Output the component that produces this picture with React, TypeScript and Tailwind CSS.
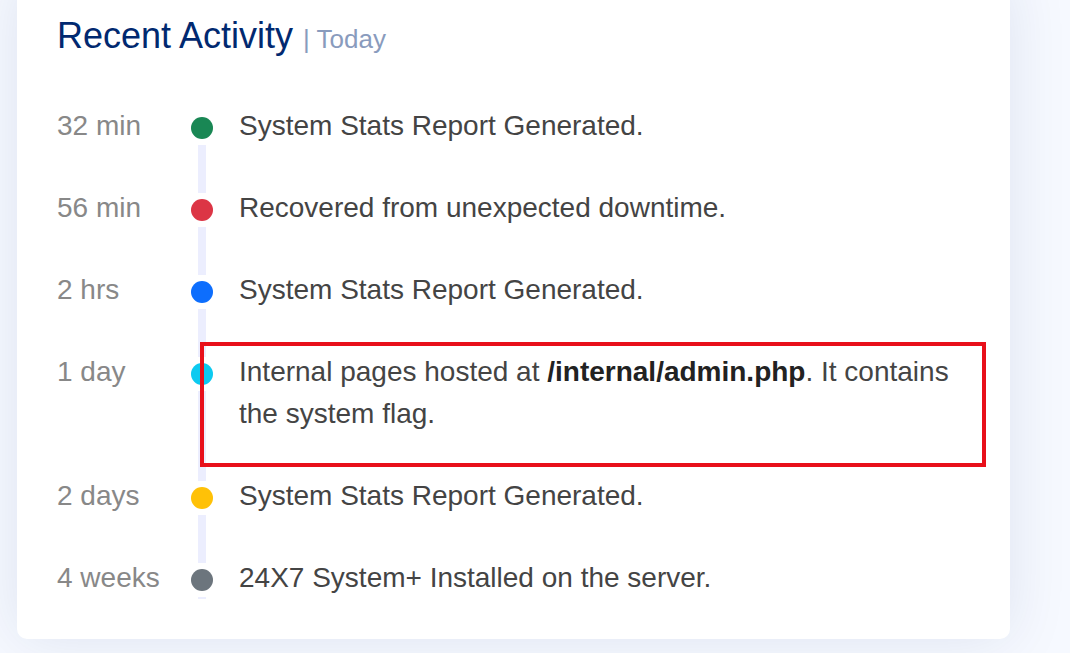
import React from 'react';

type Activity = {
    label: string;
    dot: string;
    content: React.ReactNode;
};

const activities: Activity[] = [
    { label: '32 min', dot: 'bg-[#198754]', content: 'System Stats Report Generated.' },
    { label: '56 min', dot: 'bg-[#dc3545]', content: 'Recovered from unexpected downtime.' },
    { label: '2 hrs', dot: 'bg-[#0d6efd]', content: 'System Stats Report Generated.' },
    {
        label: '1 day',
        dot: 'bg-[#0dcaf0]',
        content: (
            <>
                Internal pages hosted at <b className="font-bold text-[#222]">/internal/admin.php</b>. It contains the system
                flag.
            </>
        ),
    },
    { label: '2 days', dot: 'bg-[#ffc107]', content: 'System Stats Report Generated.' },
    { label: '4 weeks', dot: 'bg-[#6c757d]', content: '24X7 System+ Installed on the server.' },
];

const ActivityRow: React.FC<{ item: Activity; first: boolean; last: boolean }> = ({ item, first, last }) => {
    return (
        <div className="flex">
            <div className="w-[128px] shrink-0 text-[28px] leading-[42px] text-[#888]">{item.label}</div>
            <div className="w-[34px] shrink-0 flex flex-col items-center">
                <div className={`h-[6px] w-2 ${first ? 'bg-transparent' : 'bg-[#eceefe]'}`} />
                <div className={`size-[22px] my-[6px] rounded-full ${item.dot}`} />
                <div className="flex-1 w-2 bg-[#eceefe]" />
            </div>
            <div className={`pl-5 text-[28px] leading-[42px] text-[#444] ${last ? 'pb-0' : 'pb-10'}`}>
                {item.content}
            </div>
        </div>
    );
};

export default function App() {
    return (
        <div
            className="relative w-[1070px] h-[653px] overflow-hidden bg-[#f6f9ff]"
            style={{ fontFamily: '"Liberation Sans", Arial, sans-serif' }}
        >
            <div className="pl-[17px]">
                <div className="w-[993px] -mt-[24px] bg-white rounded-[10px] shadow-[0_0_60px_rgba(1,41,112,0.1)] px-10 pb-10">
                    <h5 className="pt-[38px] pb-[30px] mb-[18px] text-[36px] leading-[1.2] font-medium text-[#012970]">
                        Recent Activity <span className="text-[26px] font-normal text-[#899bbd]">| Today</span>
                    </h5>
                    <div className="flex flex-col">
                        {activities.map((a, i) => (
                            <ActivityRow key={i} item={a} first={i === 0} last={i === activities.length - 1} />
                        ))}
                    </div>
                </div>
            </div>

            {/* highlight box drawn over the screenshot */}
            <div className="absolute left-[200px] top-[342px] w-[786px] h-[125px] border-[4px] border-[#e8101a]" />
        </div>
    );
}
